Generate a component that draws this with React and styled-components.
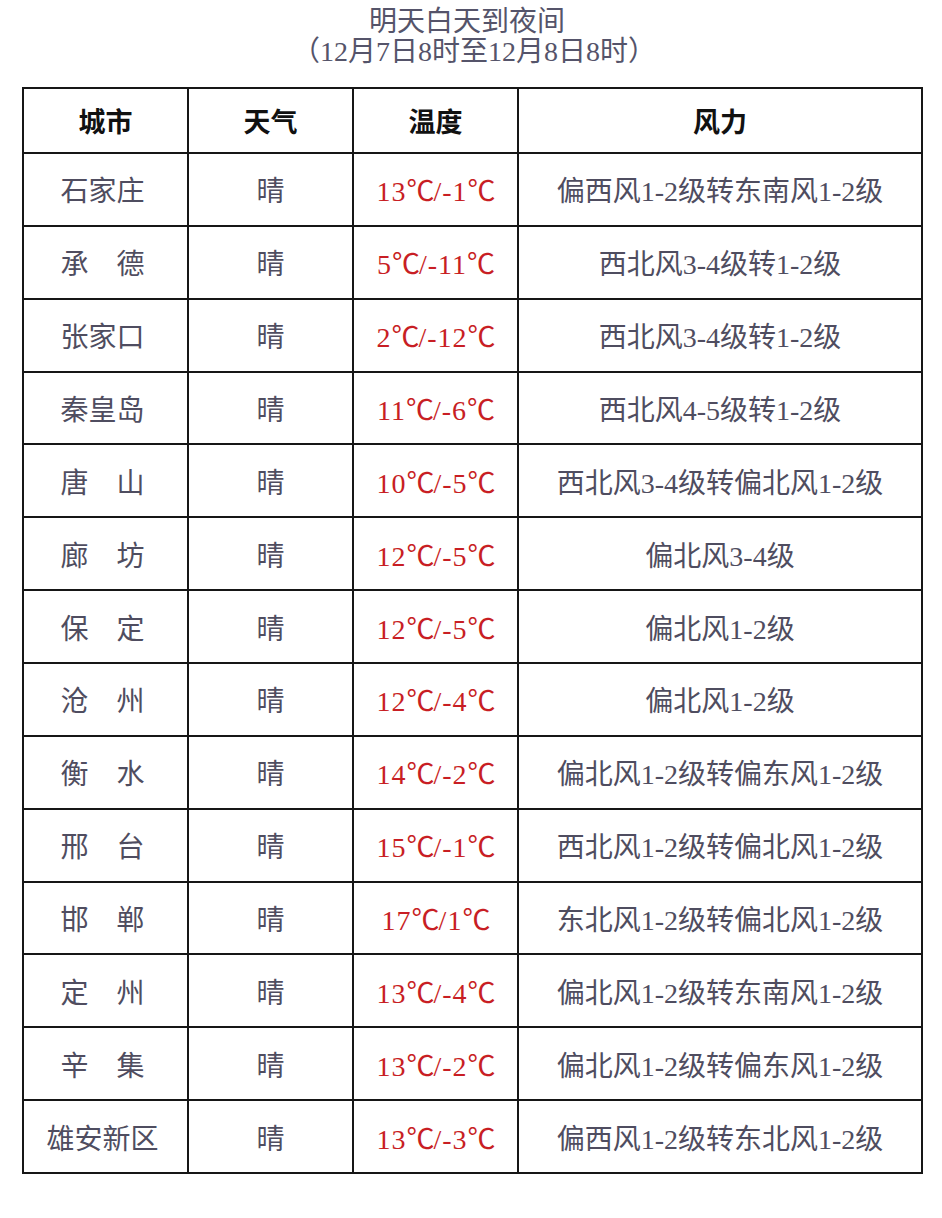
import React from 'react';
import styled, { createGlobalStyle } from 'styled-components';

const GlobalStyle = createGlobalStyle`
  html, body {
    margin: 0;
    padding: 0;
    background: #ffffff;
  }
  body {
    font-family: "Liberation Serif", "Noto Sans CJK SC", serif;
  }
`;

const Page = styled.div`
  width: 942px;
  height: 1218px;
  padding-top: 7px;
  box-sizing: border-box;
`;

const Title = styled.div`
  text-align: center;
  color: #55546a;
  font-size: 28px;
  line-height: 30px;
  margin-left: ${p => (p.$sub ? '6px' : '-8px')};
`;

const Table = styled.table`
  margin: 20px 0 0 22px;
  width: 901px;
  border-collapse: collapse;
  table-layout: fixed;
`;

const Th = styled.th`
  height: 63px;
  border: 2px solid #161616;
  color: #111111;
  font-size: 27px;
  font-weight: 600;
  text-align: center;
  vertical-align: middle;
  padding: 0;
`;

const Td = styled.td`
  height: 70.86px;
  border: 2px solid #161616;
  color: ${p => (p.$hot ? '#c81e24' : '#4f4d60')};
  font-size: 28px;
  letter-spacing: ${p => (p.$hot ? '1px' : '0')};
  text-align: center;
  vertical-align: middle;
  padding: 0 ${p => (p.$city ? '6px' : '0')} 0 0;
  white-space: nowrap;
`;

const Deg = styled.span`
  display: inline-block;
  width: 27px;
  text-align: center;
  letter-spacing: 0;
`;

const rows = [
  ['石家庄', '13/-1', '偏西风1-2级转东南风1-2级'],
  ['承　德', '5/-11', '西北风3-4级转1-2级'],
  ['张家口', '2/-12', '西北风3-4级转1-2级'],
  ['秦皇岛', '11/-6', '西北风4-5级转1-2级'],
  ['唐　山', '10/-5', '西北风3-4级转偏北风1-2级'],
  ['廊　坊', '12/-5', '偏北风3-4级'],
  ['保　定', '12/-5', '偏北风1-2级'],
  ['沧　州', '12/-4', '偏北风1-2级'],
  ['衡　水', '14/-2', '偏北风1-2级转偏东风1-2级'],
  ['邢　台', '15/-1', '西北风1-2级转偏北风1-2级'],
  ['邯　郸', '17/1', '东北风1-2级转偏北风1-2级'],
  ['定　州', '13/-4', '偏北风1-2级转东南风1-2级'],
  ['辛　集', '13/-2', '偏北风1-2级转偏东风1-2级'],
  ['雄安新区', '13/-3', '偏西风1-2级转东北风1-2级'],
];

const Temp = ({ value }) => {
  const [hi, lo] = value.split('/');
  return (
    <>
      {hi}
      <Deg>℃</Deg>/{lo}
      <Deg>℃</Deg>
    </>
  );
};

export default function App() {
  return (
    <Page>
      <GlobalStyle />
      <Title>明天白天到夜间</Title>
      <Title $sub>（12月7日8时至12月8日8时）</Title>
      <Table>
        <colgroup>
          <col style={{ width: 165 }} />
          <col style={{ width: 165 }} />
          <col style={{ width: 165 }} />
          <col />
        </colgroup>
        <thead>
          <tr>
            <Th>城市</Th>
            <Th>天气</Th>
            <Th>温度</Th>
            <Th>风力</Th>
          </tr>
        </thead>
        <tbody>
          {rows.map(([city, temp, wind]) => (
            <tr key={city}>
              <Td $city>{city}</Td>
              <Td>晴</Td>
              <Td $hot>
                <Temp value={temp} />
              </Td>
              <Td>{wind}</Td>
            </tr>
          ))}
        </tbody>
      </Table>
    </Page>
  );
}
